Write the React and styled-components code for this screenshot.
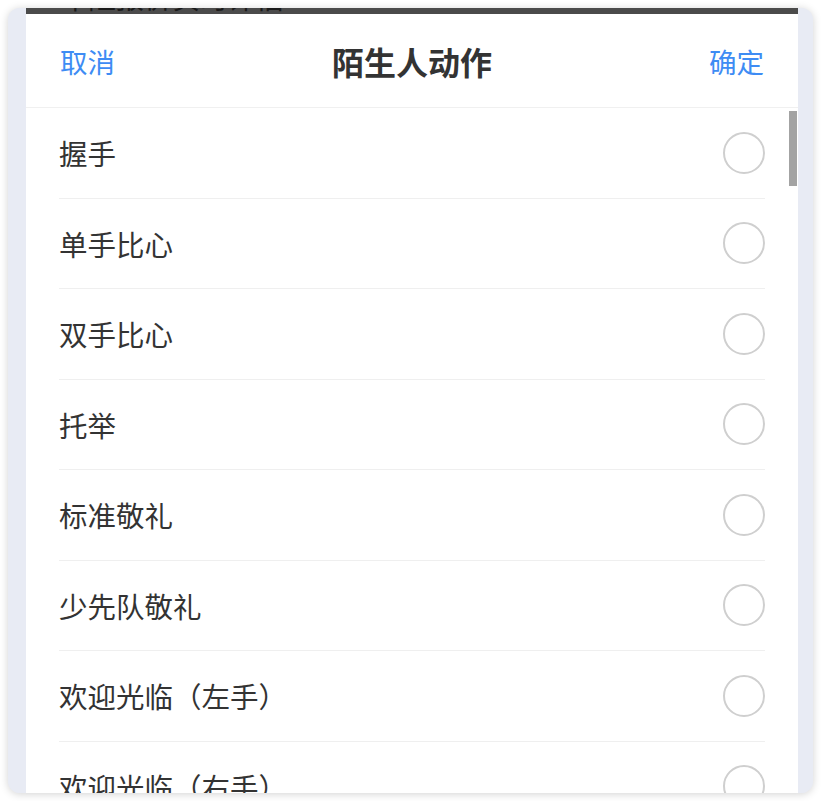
import React from 'react';
import styled, { createGlobalStyle } from 'styled-components';

const Global = createGlobalStyle`
  html, body { margin: 0; padding: 0; background: #fff; }
  body { padding: 8px; font-family: "Noto Sans CJK SC", "Noto Sans", sans-serif; }
`;

const Frame = styled.div`
  width: 805px;
  height: 785px;
  border-radius: 12px;
  overflow: hidden;
  display: flex;
  background: #e8ebf4;
  box-shadow: 0 1px 8px rgba(0, 0, 0, 0.18);
`;

const Side = styled.div`
  width: ${p => p.$w}px;
  flex: none;
  background: #e8ebf4;
`;

const Sheet = styled.div`
  position: relative;
  flex: 1;
  display: flex;
  flex-direction: column;
  background: #fff;
  overflow: hidden;
`;

const BehindBar = styled.div`
  height: 6px;
  flex: none;
  background: #4b4b4b;
  overflow: hidden;
  padding-left: 34px;
`;

const BehindText = styled.div`
  margin-top: -27px;
  font-size: 28px;
  line-height: 32px;
  color: #1a1a1a;
`;

const Header = styled.div`
  height: 93px;
  flex: none;
  display: flex;
  align-items: center;
  justify-content: space-between;
  padding: 0 34px;
  border-bottom: 1px solid #f0f0f0;
`;

const Action = styled.button`
  border: 0;
  background: none;
  padding: 0;
  font-family: inherit;
  font-size: 27.5px;
  color: #3e8cf4;
  cursor: pointer;
`;

const Title = styled.h1`
  margin: 0;
  font-size: 32px;
  font-weight: 700;
  color: #333;
`;

const List = styled.div`
  flex: 1;
  overflow: hidden;
  padding: 0 33px;
`;

const Row = styled.label`
  height: 90.5px;
  box-sizing: border-box;
  display: flex;
  align-items: center;
  justify-content: space-between;
  border-bottom: 1px solid #efefef;
  font-size: 28.5px;
  color: #333;
`;

const Radio = styled.span`
  width: 38px;
  height: 38px;
  border-radius: 50%;
  border: 2px solid #cfcfcf;
  flex: none;
  margin-right: 0;
`;

const Thumb = styled.div`
  position: absolute;
  right: 1px;
  top: 103px;
  width: 8px;
  height: 75px;
  background: #a3a3a3;
`;

const actions = [
  '握手',
  '单手比心',
  '双手比心',
  '托举',
  '标准敬礼',
  '少先队敬礼',
  '欢迎光临（左手）',
  '欢迎光临（右手）',
  '挥手',
];

export default function App() {
  return (
    <>
      <Global />
      <Frame>
        <Side $w={18} />
        <Sheet>
          <BehindBar>
            <BehindText>车险报价实时评估</BehindText>
          </BehindBar>
          <Header>
            <Action>取消</Action>
            <Title>陌生人动作</Title>
            <Action>确定</Action>
          </Header>
          <List>
            {actions.map(name => (
              <Row key={name}>
                <span>{name}</span>
                <Radio />
              </Row>
            ))}
          </List>
          <Thumb />
        </Sheet>
        <Side $w={15} />
      </Frame>
    </>
  );
}
